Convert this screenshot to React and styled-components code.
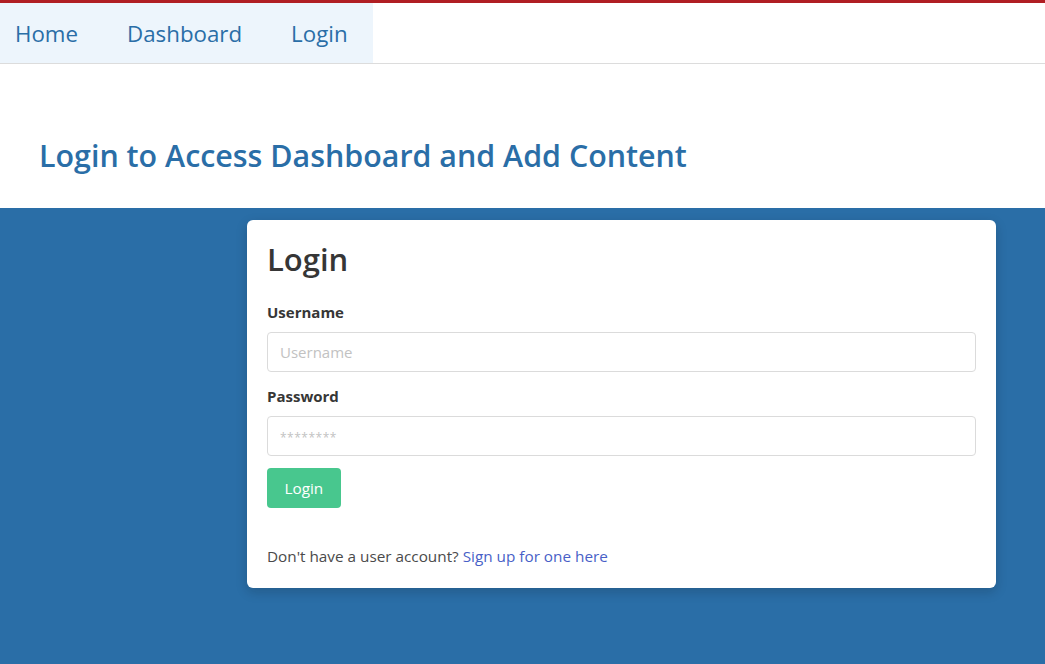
import React from "react";
import styled, { createGlobalStyle } from "styled-components";

const GlobalStyle = createGlobalStyle`
  html, body {
    margin: 0;
    padding: 0;
    background: #2a6ea7;
    font-family: "Open Sans", "Noto Sans", sans-serif;
  }
  * { box-sizing: border-box; }
`;

const Page = styled.div`
  min-height: 664px;
  display: flex;
  flex-direction: column;
  background: #2a6ea7;
`;

const TopBar = styled.header`
  background: #fff;
  border-top: 3px solid #b01e23;
  border-bottom: 1px solid #dcdcdc;
  display: flex;
`;

const NavList = styled.nav`
  display: flex;
  gap: 49px;
  height: 60px;
  align-items: center;
  padding: 0 25px 0 15px;
  background: #edf5fc;
`;

const NavLink = styled.a`
  font-size: 22.3px;
  color: #2a6ea7;
  text-decoration: none;
  cursor: pointer;
`;

const Hero = styled.section`
  background: #fff;
  height: 144px;
  padding: 74px 39px 0;
`;

const HeroTitle = styled.h1`
  margin: 0;
  font-size: 30.4px;
  font-weight: 600;
  line-height: 36px;
  color: #2a6ea7;
`;

const Main = styled.main`
  flex: 1;
  padding: 12px 49px 0 247px;
`;

const Card = styled.div`
  background: #fff;
  border-radius: 6px;
  box-shadow: 0 4px 12px rgba(10, 10, 10, 0.18);
  padding: 19px 20px 20px;
`;

const CardTitle = styled.h2`
  margin: 0 0 23px;
  font-size: 31px;
  font-weight: 600;
  line-height: 40px;
  color: #363636;
`;

const Field = styled.div`
  margin-bottom: 14px;
  &:last-of-type {
    margin-bottom: 12px;
  }
`;

const Label = styled.label`
  display: block;
  font-size: 15px;
  font-weight: 700;
  color: #363636;
  line-height: 20px;
  margin-bottom: 10px;
`;

const Input = styled.input`
  display: block;
  width: 100%;
  height: 40px;
  border: 1px solid #dbdbdb;
  border-radius: 4px;
  padding: 0 12px;
  font-family: inherit;
  font-size: 15px;
  color: #363636;
  &::placeholder {
    color: #c2c2c2;
  }
  &[type="password"]::placeholder {
    font-size: 12px;
    letter-spacing: 0.5px;
  }
`;

const Button = styled.button`
  height: 40px;
  padding: 0 17.5px;
  border: none;
  border-radius: 4px;
  background: #48c78e;
  color: #fff;
  font-family: inherit;
  font-size: 15.3px;
  cursor: pointer;
`;

const Footer = styled.p`
  margin: 36px 0 0;
  font-size: 15.3px;
  line-height: 24px;
  color: #4a4a4a;
`;

const Link = styled.a`
  color: #485fc7;
  text-decoration: none;
`;

export default function App() {
  return (
    <Page>
      <GlobalStyle />
      <TopBar>
        <NavList>
          <NavLink>Home</NavLink>
          <NavLink>Dashboard</NavLink>
          <NavLink>Login</NavLink>
        </NavList>
      </TopBar>
      <Hero>
        <HeroTitle>Login to Access Dashboard and Add Content</HeroTitle>
      </Hero>
      <Main>
        <Card>
          <CardTitle>Login</CardTitle>
          <Field>
            <Label>Username</Label>
            <Input placeholder="Username" />
          </Field>
          <Field>
            <Label>Password</Label>
            <Input type="password" placeholder="********" />
          </Field>
          <Button>Login</Button>
          <Footer>
            Don't have a user account? <Link>Sign up for one here</Link>
          </Footer>
        </Card>
      </Main>
    </Page>
  );
}
